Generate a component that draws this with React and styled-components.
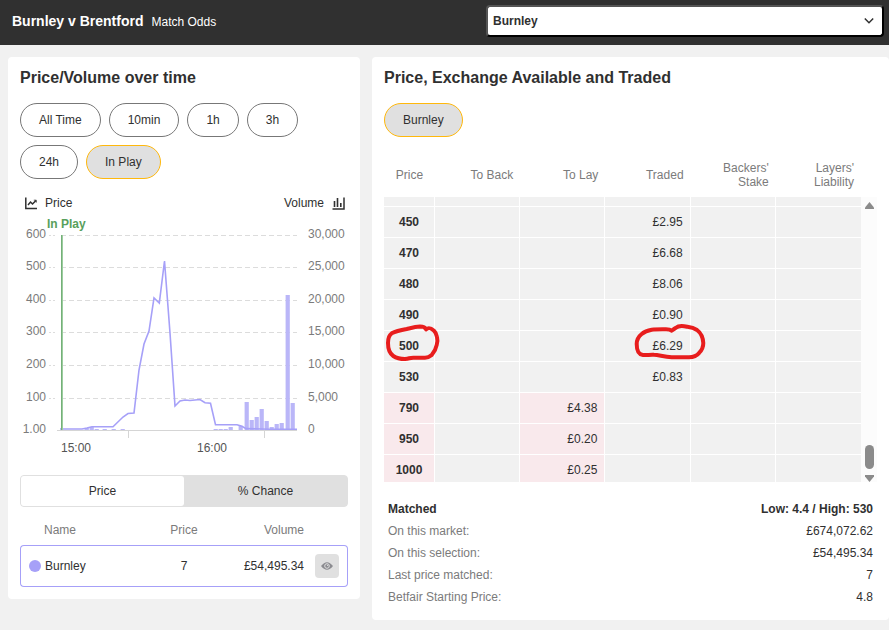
import React, { useLayoutEffect, useRef, useState } from "react";
import styled, { createGlobalStyle } from "styled-components";

const GlobalStyle = createGlobalStyle`
  * { box-sizing: border-box; }
  body {
    margin: 0;
    background: #f1f1f1;
    color: #303030;
    font-family: "Liberation Sans", Arial, sans-serif;
    font-size: 12px;
    line-height: 16px;
  }
  button, select { font: inherit; color: inherit; }
`;

const Header = styled.header`
  display: flex;
  align-items: center;
  justify-content: space-between;
  gap: 16px;
  height: 45px;
  padding: 0 5px 3px 12px;
  background: #303030;
  color: #fff;
`;

const MatchTitle = styled.h1`
  display: flex;
  align-items: baseline;
  gap: 8px;
  margin: 0;
  font-size: 14px;
`;

const MarketName = styled.span`
  font-size: 12px;
  font-weight: 400;
`;

const SelectWrap = styled.label`
  position: relative;
  flex: 0 1 398px;
`;

const SelectionSelect = styled.select`
  display: block;
  appearance: none;
  width: 100%;
  height: 32px;
  padding: 0 24px 0 5px;
  border: 2px outset #000;
  border-radius: 4px;
  background: #fff;
  color: #303030;
  font-weight: 700;
`;

const SelectArrow = styled.svg`
  position: absolute;
  top: 12px;
  right: 10px;
  pointer-events: none;
`;

const Page = styled.main`
  display: grid;
  grid-template-columns: minmax(0, 352fr) minmax(0, 517fr);
  align-items: start;
  gap: 12px;
  padding: 12px 0 10px 8px;
`;

const Panel = styled.section`
  padding: 12px;
  border-radius: 4px;
  background: #fff;
`;

const PanelTitle = styled.h2`
  margin: 0 0 16px;
  font-size: 16px;
  line-height: 18px;
`;

const PillRow = styled.div`
  display: flex;
  flex-wrap: wrap;
  gap: 8px;
`;

const Pill = styled.button`
  height: 34px;
  padding: 0 18px;
  border: 1px solid ${(p) => (p.$active ? "#ffb80c" : "#777")};
  border-radius: 17px;
  background: ${(p) => (p.$active ? "#e0e0e0" : "#fff")};
  cursor: pointer;
`;

const Legend = styled.div`
  display: flex;
  justify-content: space-between;
  margin-top: 16px;
  padding: 0 3px 0 5px;
`;

const LegendItem = styled.span`
  display: flex;
  align-items: center;
  gap: 8px;
`;

const ChartSvg = styled.svg`
  display: block;
  width: 100%;
  margin-bottom: 12px;
  font-size: 12px;
  fill: #7b7b7b;
`;

const Segmented = styled.div`
  display: flex;
  height: 32px;
  border: 1px solid #e0e0e0;
  border-radius: 4px;
  background: #e0e0e0;
`;

const Segment = styled.button`
  flex: 1;
  border: 0;
  border-radius: 3px;
  background: ${(p) => (p.$active ? "#fff" : "#e0e0e0")};
  cursor: pointer;
`;

const RunnerTable = styled.table`
  width: 100%;
  table-layout: fixed;
  border-spacing: 0;
`;

const RunnerHead = styled.th`
  width: ${(p) => p.$width || "auto"};
  height: 38px;
  padding: 8px 0 0 ${(p) => (p.$first ? "24px" : "0")};
  text-align: ${(p) => p.$align || "left"};
  color: #7b7b7b;
  font-weight: 400;
`;

const RunnerCell = styled.td`
  height: 42px;
  padding: 0;
  text-align: ${(p) => p.$align || "left"};
  border: solid #a6a0f8;
  border-width: 1px 0;
  &:first-child {
    padding-left: 8px;
    border-left-width: 1px;
    border-radius: 4px 0 0 4px;
  }
  &:last-child {
    padding-right: 8px;
    border-right-width: 1px;
    border-radius: 0 4px 4px 0;
  }
`;

const RunnerName = styled.span`
  display: flex;
  align-items: center;
  gap: 4px;
`;

const Dot = styled.span`
  width: 12px;
  height: 12px;
  border-radius: 50%;
  background: #a6a0f8;
`;

const EyeButton = styled.button`
  display: flex;
  align-items: center;
  justify-content: center;
  width: 24px;
  height: 24px;
  margin-left: auto;
  padding: 0;
  border: 0;
  border-radius: 4px;
  background: #e0e0e0;
  cursor: pointer;
`;

const Ladder = styled.div`
  display: flex;
`;

const LadderViewport = styled.div`
  flex: 1;
  height: 345px;
  overflow-y: scroll;
  overflow-x: hidden;
  scrollbar-width: none;
`;

const LadderTable = styled.table`
  width: 100%;
  table-layout: fixed;
  border-spacing: 0;
`;

const LadderHead = styled.th`
  position: sticky;
  top: 0;
  z-index: 2;
  width: ${(p) => (p.$price ? "51px" : "auto")};
  height: 60px;
  padding: ${(p) => (p.$price ? "16px 0 0" : "16px 7px 0 16px")};
  background: #fff;
  color: #7b7b7b;
  font-weight: 400;
  line-height: 14px;
  text-align: ${(p) => (p.$price ? "center" : "right")};
`;

const LadderCell = styled.td`
  position: relative;
  height: 31px;
  padding: ${(p) => (p.$price ? "0" : "0 7px 0 0")};
  border: solid #fff;
  border-width: 0 1px 1px 0;
  background: ${(p) => (p.$lay ? "#f9e9ec" : "#f1f1f1")};
  font-weight: ${(p) => (p.$price ? 700 : 400)};
  text-align: ${(p) => (p.$price ? "center" : "right")};
  &:last-child { border-right-width: 0; }
`;

const Scribble = styled.svg`
  position: absolute;
  z-index: 1;
  top: -8px;
  right: ${(p) => (p.$wide ? "-18px" : "-10px")};
  fill: none;
  stroke: #e81d1d;
  stroke-width: 4;
  stroke-linejoin: round;
  pointer-events: none;
`;

const ScrollTrack = styled.div`
  display: flex;
  flex-direction: column;
  align-items: center;
  width: 16px;
  height: 285px;
  margin-top: 60px;
  padding-top: 5px;
  background: #fcfcfc;
`;

const ScrollThumb = styled.div`
  width: 9px;
  height: 24px;
  margin: auto 0 6px;
  border-radius: 5px;
  background: #8b8b8b;
`;

const Summary = styled.dl`
  margin: 16px 0 0;
  padding: 0 4px;
`;

const SummaryRow = styled.div`
  display: flex;
  justify-content: space-between;
  line-height: 22px;
  font-weight: ${(p) => (p.$strong ? 700 : 400)};
  dt { color: ${(p) => (p.$strong ? "#303030" : "#7b7b7b")}; }
  dd { margin: 0; }
`;

const periods = ["All Time", "10min", "1h", "3h", "24h", "In Play"];

const axis = [
  ["600", "30,000"],
  ["500", "25,000"],
  ["400", "20,000"],
  ["300", "15,000"],
  ["200", "10,000"],
  ["100", "5,000"],
  ["1.00", "0"],
];
const gridY = [24, 56, 89, 121, 154, 187, 219];

const priceLine = [
  [40, 218], [62, 218], [67, 217], [72, 215.7], [93, 215.7], [103, 206], [108, 202.5],
  [114, 202], [119, 159], [124, 133], [129, 120], [134, 87], [139.3, 92], [144.5, 50],
  [150, 122], [155, 195], [160, 190], [165, 189], [170, 189.5], [175, 189], [180, 188.5],
  [185, 191.7], [190.5, 192.3], [195.5, 213.7], [217, 213.7], [222, 215.3], [226, 217.6],
  [250, 218.2], [277, 218.2],
];

const bars = [
  [65, 2], [70, 3], [75, 1], [83, 1], [92, 1], [101, 1],
  [194, 1], [199, 1], [204, 1], [209, 3], [219, 4], [225, 28], [230, 10], [235, 13],
  [240, 21], [245, 9], [250, 3], [255, 6], [260, 7], [266, 135], [271, 27],
];

const columns = ["Price", "To Back", "To Lay", "Traded", "Backers' Stake", "Layers' Liability"];

const ladder = [
  { price: "440" },
  { price: "450", traded: "£2.95" },
  { price: "470", traded: "£6.68" },
  { price: "480", traded: "£8.06" },
  { price: "490", traded: "£0.90" },
  { price: "500", traded: "£6.29", marked: true },
  { price: "530", traded: "£0.83" },
  { price: "790", lay: "£4.38" },
  { price: "950", lay: "£0.20" },
  { price: "1000", lay: "£0.25" },
];

const summary = [
  ["Matched", "Low: 4.4 / High: 530"],
  ["On this market:", "£674,072.62"],
  ["On this selection:", "£54,495.34"],
  ["Last price matched:", "7"],
  ["Betfair Starting Price:", "4.8"],
];

function Chart() {
  return (
    <ChartSvg viewBox="0 0 328 252" role="img" aria-label="Price and volume over time">
      {gridY.slice(0, 6).map((y) => (
        <g key={y} stroke="#dcdcdc" strokeDasharray="5 3">
          <path d={`M29 ${y + 0.5}H36`} strokeDasharray="2 2" />
          <path d={`M41 ${y + 0.5}H277`} />
        </g>
      ))}
      <path d="M37 219.5H277M108.5 220V227M244.5 220V227" fill="none" stroke="#d5d5d5" />
      {axis.map(([left, right], i) => (
        <g key={left}>
          <text x="26" y={gridY[i] + 3} textAnchor="end">{left}</text>
          <text x="288" y={gridY[i] + 3}>{right}</text>
        </g>
      ))}
      {bars.map(([x, h]) => (
        <rect key={x} x={x - 0.4} y={219 - h} width="4.2" height={h} fill="#bab6f8" />
      ))}
      <polyline
        points={priceLine.map((p) => p.join(",")).join(" ")}
        fill="none"
        stroke="#a6a0f8"
        strokeWidth="1.6"
      />
      <path d="M42 24V219" stroke="#9ccc9f" strokeWidth="2" />
      <path d="M41.5 24V219" stroke="#74b078" />
      <text x="27" y="17" fill="#58a05c" fontWeight="700">In Play</text>
      <text x="41" y="241" fill="#545454">15:00</text>
      <text x="177" y="241" fill="#545454">16:00</text>
    </ChartSvg>
  );
}

export default function App() {
  const [period, setPeriod] = useState("In Play");
  const [mode, setMode] = useState("Price");
  const viewport = useRef(null);

  useLayoutEffect(() => {
    viewport.current.scrollTop = 21;
  }, []);

  return (
    <>
      <GlobalStyle />
      <Header>
        <MatchTitle>
          Burnley v Brentford <MarketName>Match Odds</MarketName>
        </MatchTitle>
        <SelectWrap>
          <SelectionSelect aria-label="Selection" defaultValue="Burnley">
            <option>Burnley</option>
          </SelectionSelect>
          <SelectArrow width="10" height="8" viewBox="0 0 10 8" aria-hidden="true">
            <path d="M0.8 1.5L5 5.7L9.2 1.5" fill="none" stroke="#303030" strokeWidth="1.5" />
          </SelectArrow>
        </SelectWrap>
      </Header>

      <Page>
        <Panel>
          <PanelTitle>Price/Volume over time</PanelTitle>
          <PillRow>
            {periods.map((p) => (
              <Pill key={p} type="button" $active={p === period} aria-pressed={p === period} onClick={() => setPeriod(p)}>
                {p}
              </Pill>
            ))}
          </PillRow>

          <Legend>
            <LegendItem>
              <svg width="12" height="13" viewBox="0 0 12 13" fill="none" stroke="#303030" aria-hidden="true">
                <path d="M0.8 0.5V11.5H12" strokeWidth="1.5" />
                <path d="M3 8L5.5 5L7.5 7L11 3.4" strokeWidth="1.5" />
                <path d="M8.8 3.2H11.3V5.6" strokeWidth="0.8" />
              </svg>
              Price
            </LegendItem>
            <LegendItem>
              Volume
              <svg width="13" height="13" viewBox="0 0 13 13" fill="none" stroke="#303030" aria-hidden="true">
                <path d="M12 0.5V12H0.5" strokeWidth="1.5" />
                <path d="M2.5 4V10M5.5 1V10M8.8 6V10" strokeWidth="1.6" />
              </svg>
            </LegendItem>
          </Legend>
          <Chart />

          <Segmented role="group" aria-label="Display">
            {["Price", "% Chance"].map((m) => (
              <Segment key={m} type="button" $active={m === mode} aria-pressed={m === mode} onClick={() => setMode(m)}>
                {m}
              </Segment>
            ))}
          </Segmented>

          <RunnerTable>
            <thead>
              <tr>
                <RunnerHead $first>Name</RunnerHead>
                <RunnerHead $width="80px" $align="center">Price</RunnerHead>
                <RunnerHead $width="80px" $align="right">Volume</RunnerHead>
                <RunnerHead $width="44px" aria-label="Visibility" />
              </tr>
            </thead>
            <tbody>
              <tr>
                <RunnerCell><RunnerName><Dot />Burnley</RunnerName></RunnerCell>
                <RunnerCell $align="center">7</RunnerCell>
                <RunnerCell $align="right">£54,495.34</RunnerCell>
                <RunnerCell>
                  <EyeButton type="button" aria-label="Toggle Burnley">
                    <svg width="12" height="8" viewBox="0 0 12 8" aria-hidden="true">
                      <path d="M0 4Q6 -3.6 12 4Q6 11.6 0 4Z" fill="#8b8b90" />
                      <circle cx="6" cy="4" r="2.3" fill="#8b8b90" stroke="#e0e0e0" />
                      <circle cx="6.6" cy="3.4" r="0.6" fill="#e0e0e0" />
                    </svg>
                  </EyeButton>
                </RunnerCell>
              </tr>
            </tbody>
          </RunnerTable>
        </Panel>

        <Panel>
          <PanelTitle>Price, Exchange Available and Traded</PanelTitle>
          <PillRow>
            <Pill type="button" $active aria-pressed="true">Burnley</Pill>
          </PillRow>

          <Ladder>
            <LadderViewport ref={viewport}>
              <LadderTable>
                <thead>
                  <tr>
                    {columns.map((c, i) => (
                      <LadderHead key={c} $price={i === 0}>{c}</LadderHead>
                    ))}
                  </tr>
                </thead>
                <tbody>
                  {ladder.map((row) => (
                    <tr key={row.price}>
                      <LadderCell $price $lay={!!row.lay}>
                        {row.price}
                        {row.marked && (
                          <Scribble width="60" height="40" viewBox="0 0 60 40" aria-hidden="true">
                            <path d="M42 6.3C41 4 39 3.6 36 3.6C31 3.8 27 5 22.7 6C17 7 12 8 7.7 10.3C4.5 12.5 4 16 4 20C4 25 5 30 9.3 33C13 35.5 17 36 21 36C26 35.5 25 34.7 29.3 34.7H41C45 34.7 46 33.5 47.7 32C51 28 52 26 52.7 22C54 18 53.5 16 53 14C52.5 11 51.5 9 50 7.7C47 5 45 4 42 6.3Z" />
                          </Scribble>
                        )}
                      </LadderCell>
                      <LadderCell />
                      <LadderCell $lay={!!row.lay}>{row.lay}</LadderCell>
                      <LadderCell>
                        {row.traded}
                        {row.marked && (
                          <Scribble $wide width="76" height="40" viewBox="0 0 76 40" aria-hidden="true">
                            <path d="M39.7 7.7C38 6.3 37 6.3 34 6.3C28 6.3 24 6.2 19.7 6.7C15 7.5 12 9 9.7 11C6 14 4.7 17 4.7 21C4.7 27 6 31.5 11 32C15 32.3 18 31.5 22 31.8C27 32 32 34 39.7 34.3H57C63 34.3 65.5 32 67.3 29.7C71 26 71.3 23 71.3 20C71 14 69 10 65 7C61 4.5 58 4.2 55 3.8C50 2.4 46 3 43.5 5Z" />
                          </Scribble>
                        )}
                      </LadderCell>
                      <LadderCell />
                      <LadderCell />
                    </tr>
                  ))}
                </tbody>
              </LadderTable>
            </LadderViewport>
            <ScrollTrack aria-hidden="true">
              <svg width="9" height="7" viewBox="0 0 9 7"><path d="M4.5 0L9 5.5V7H0V5.5Z" fill="#8b8b8b" /></svg>
              <ScrollThumb />
              <svg width="9" height="7" viewBox="0 0 9 7"><path d="M4.5 7L9 1.5V0H0V1.5Z" fill="#8b8b8b" /></svg>
            </ScrollTrack>
          </Ladder>

          <Summary>
            {summary.map(([label, value], i) => (
              <SummaryRow key={label} $strong={i === 0}>
                <dt>{label}</dt>
                <dd>{value}</dd>
              </SummaryRow>
            ))}
          </Summary>
        </Panel>
      </Page>
    </>
  );
}
